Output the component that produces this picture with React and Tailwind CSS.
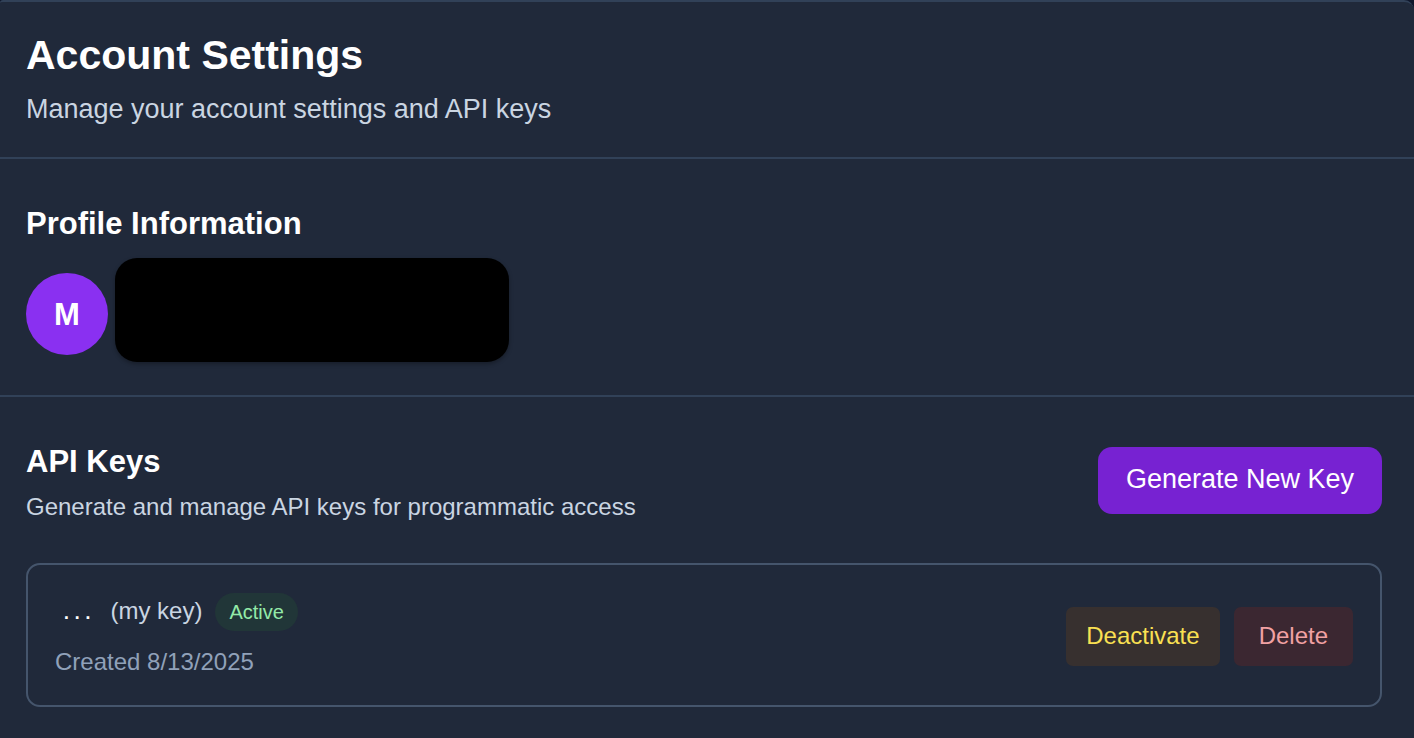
function KeyRow({ name, status, created }) {
  return (
    <li className="flex items-center justify-between rounded-[14px] border-2 border-slate-600 px-[27px] pt-7 pb-[26px]">
      <div>
        <div className="flex items-center gap-[13px]">
          <div className="flex items-baseline gap-[11px]">
            <code className="px-[6px] font-['Liberation_Mono',monospace] text-[18px] leading-8 font-bold text-white">...</code>
            <span className="text-[24px] leading-8 text-slate-300">({name})</span>
          </div>
          <span className="rounded-full bg-[#213638] px-[14px] py-[5px] text-[20px] leading-7 text-[#93eaa8]">{status}</span>
        </div>
        <p className="mt-[14px] text-[24px] leading-[34px] text-slate-400">Created {created}</p>
      </div>
      <div className="flex gap-[14px]">
        <button type="button" className="rounded-[7px] bg-[#37302f] px-5 pt-3 pb-[13px] text-[24px] leading-[34px] text-[#fae052]">
          Deactivate
        </button>
        <button type="button" className="rounded-[7px] bg-[#3b2731] px-[25px] pt-3 pb-[13px] text-[24px] leading-[34px] text-[#f1a1a3]">
          Delete
        </button>
      </div>
    </li>
  );
}

export default function App() {
  return (
    <div className="min-h-screen bg-slate-900 font-['Liberation_Sans',Arial,sans-serif]">
      <main className="min-h-screen rounded-tl-[3px] rounded-tr-[10px] border-t-2 border-slate-700 bg-[#20293a]">
        <header className="border-b-2 border-slate-700 pt-[29px] pr-8 pb-[26px] pl-[26px]">
          <h1 className="text-[41px] leading-[48px] font-bold text-white">Account Settings</h1>
          <p className="mt-2 text-[27px] leading-[44px] text-slate-300">Manage your account settings and API keys</p>
        </header>

        <section className="border-b-2 border-slate-700 pt-10 pr-8 pb-[33px] pl-[26px]">
          <h2 className="text-[31px] leading-[50px] font-bold text-white">Profile Information</h2>
          <div className="mt-[9px] flex items-center gap-[7px]">
            <div className="mt-[7px] flex size-[82px] items-center justify-center rounded-full bg-[#8a30f1] pt-1 text-[31px] font-bold text-white">
              M
            </div>
            <div className="h-[104px] w-[394px] rounded-[22px] bg-black shadow-[0_2px_4px_rgba(0,0,0,0.3)]" />
          </div>
        </section>

        <section className="pt-10 pr-8 pb-7 pl-[26px]">
          <div className="flex items-center justify-between">
            <div>
              <h2 className="text-[31px] leading-[50px] font-bold text-white">API Keys</h2>
              <p className="mt-[3px] text-[24px] leading-[34px] text-slate-300">
                Generate and manage API keys for programmatic access
              </p>
            </div>
            <button type="button" className="rounded-[14px] bg-[#7722d2] px-7 pt-[10px] pb-[13px] text-[27px] leading-[44px] text-white">
              Generate New Key
            </button>
          </div>
          <ul className="mt-[39px]">
            <KeyRow name="my key" status="Active" created="8/13/2025" />
          </ul>
        </section>
      </main>
    </div>
  );
}
